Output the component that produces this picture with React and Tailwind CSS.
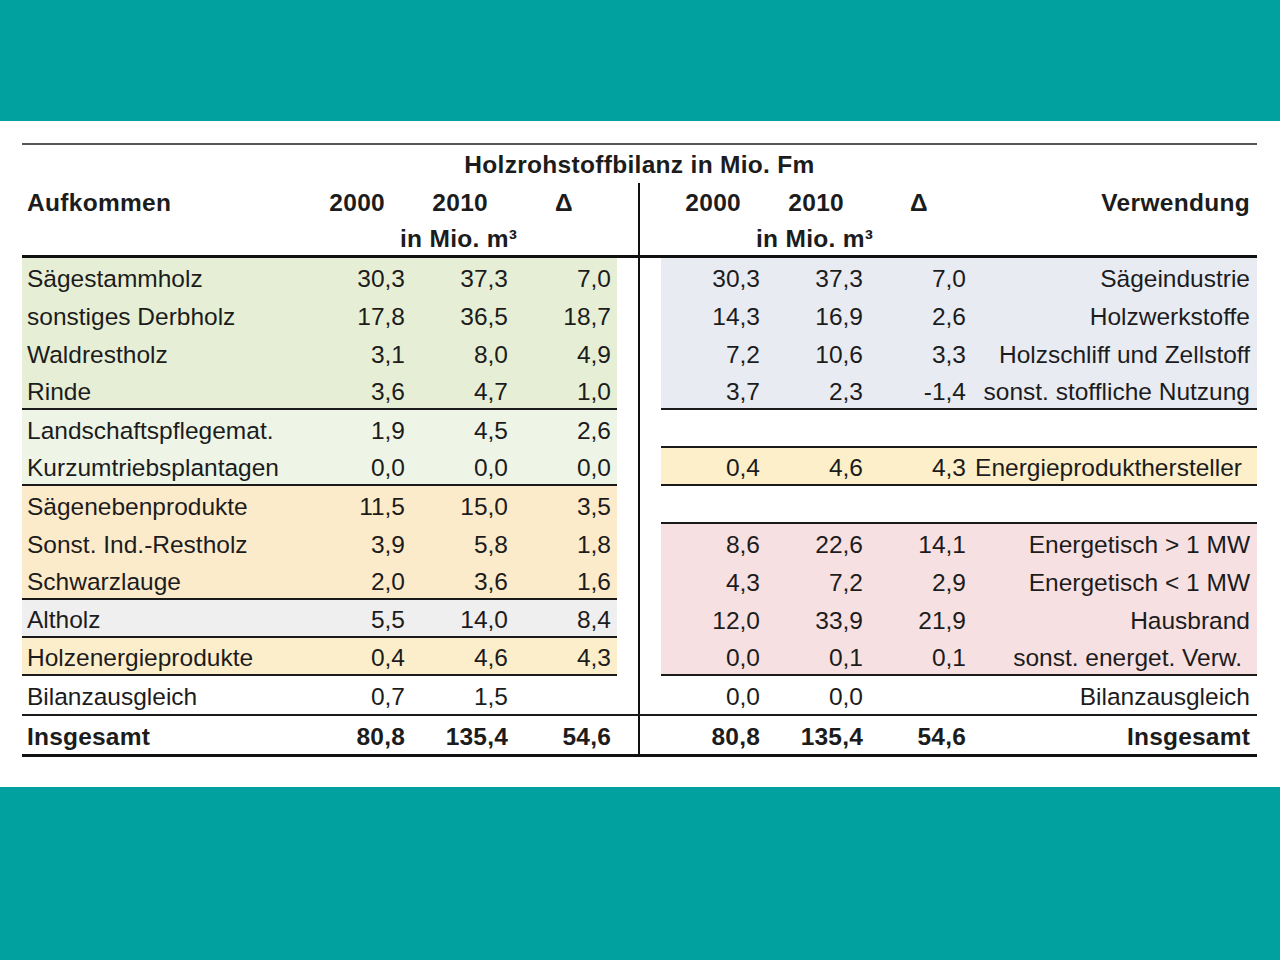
import React from "react";

const line = "border-b-2 border-[#1a1a1a]";

const links = [
  { n: "Sägestammholz", a: "30,3", b: "37,3", d: "7,0", bg: "bg-[#e6efd6]" },
  { n: "sonstiges Derbholz", a: "17,8", b: "36,5", d: "18,7", bg: "bg-[#e6efd6]" },
  { n: "Waldrestholz", a: "3,1", b: "8,0", d: "4,9", bg: "bg-[#e6efd6]" },
  { n: "Rinde", a: "3,6", b: "4,7", d: "1,0", bg: "bg-[#e6efd6]", end: true },
  { n: "Landschaftspflegemat.", a: "1,9", b: "4,5", d: "2,6", bg: "bg-[#eef5e6]" },
  { n: "Kurzumtriebsplantagen", a: "0,0", b: "0,0", d: "0,0", bg: "bg-[#eef5e6]", end: true },
  { n: "Sägenebenprodukte", a: "11,5", b: "15,0", d: "3,5", bg: "bg-[#fcebcb]" },
  { n: "Sonst. Ind.-Restholz", a: "3,9", b: "5,8", d: "1,8", bg: "bg-[#fcebcb]" },
  { n: "Schwarzlauge", a: "2,0", b: "3,6", d: "1,6", bg: "bg-[#fcebcb]", end: true },
  { n: "Altholz", a: "5,5", b: "14,0", d: "8,4", bg: "bg-[#efefef]", end: true },
  { n: "Holzenergieprodukte", a: "0,4", b: "4,6", d: "4,3", bg: "bg-[#fdeecb]", end: true },
  { n: "Bilanzausgleich", a: "0,7", b: "1,5", d: "", bg: "bg-white" },
];

const rechts = [
  { n: "Sägeindustrie", a: "30,3", b: "37,3", d: "7,0", bg: "bg-[#e9ebf3]" },
  { n: "Holzwerkstoffe", a: "14,3", b: "16,9", d: "2,6", bg: "bg-[#e9ebf3]" },
  { n: "Holzschliff und Zellstoff", a: "7,2", b: "10,6", d: "3,3", bg: "bg-[#e9ebf3]" },
  { n: "sonst. stoffliche Nutzung", a: "3,7", b: "2,3", d: "-1,4", bg: "bg-[#e9ebf3]", end: true },
  { n: "", a: "", b: "", d: "", bg: "bg-white", end: true },
  { n: "Energieprodukthersteller", a: "0,4", b: "4,6", d: "4,3", bg: "bg-[#fdefc9]", end: true, pad: true },
  { n: "", a: "", b: "", d: "", bg: "bg-white", end: true },
  { n: "Energetisch > 1 MW", a: "8,6", b: "22,6", d: "14,1", bg: "bg-[#f7e0e1]" },
  { n: "Energetisch < 1 MW", a: "4,3", b: "7,2", d: "2,9", bg: "bg-[#f7e0e1]" },
  { n: "Hausbrand", a: "12,0", b: "33,9", d: "21,9", bg: "bg-[#f7e0e1]" },
  { n: "sonst. energet. Verw.", a: "0,0", b: "0,1", d: "0,1", bg: "bg-[#f7e0e1]", end: true, pad: true },
  { n: "Bilanzausgleich", a: "0,0", b: "0,0", d: "", bg: "bg-white" },
];

function Trenner() {
  return (
    <div className="w-[44px] flex justify-center">
      <div className="w-[2px] bg-[#111]" />
    </div>
  );
}

function LinkeZeile({ z }) {
  return (
    <div
      className={`h-[38px] grid grid-cols-[323px_60px_103px_103px] pr-[6px] pt-[4px] items-center ${z.bg} ${z.end ? line : ""}`}
    >
      <span className="pl-[5px] whitespace-nowrap">{z.n}</span>
      <span className="text-right">{z.a}</span>
      <span className="text-right">{z.b}</span>
      <span className="text-right">{z.d}</span>
    </div>
  );
}

function RechteZeile({ z }) {
  return (
    <div
      className={`h-[38px] grid grid-cols-[99px_103px_103px_284px] pr-[7px] pt-[4px] items-center ${z.bg} ${z.end ? line : ""}`}
    >
      <span className="text-right">{z.a}</span>
      <span className="text-right">{z.b}</span>
      <span className="text-right">{z.d}</span>
      <span className={`text-right whitespace-nowrap ${z.pad ? "pr-[8px]" : ""}`}>{z.n}</span>
    </div>
  );
}

export default function App() {
  return (
    <div className="w-[1280px] h-[960px] flex flex-col bg-white text-[#1c1c1c] font-['Liberation_Sans',Arial,sans-serif] text-[24.5px] leading-none">
      <div className="h-[121px] bg-[#00a19f]" />

      <div className="h-[666px] pt-[22px] pl-[22px] pr-[23px]">
        {/* Titel */}
        <div className="border-t-2 border-[#555] h-[40px] pt-[3px] flex items-center justify-center font-bold tracking-[0.3px]">
          Holzrohstoffbilanz in Mio. Fm
        </div>

        {/* Kopfzeilen */}
        <div className="flex border-b-[3px] border-[#111] font-bold tracking-[0.3px]">
          <div className="w-[595px]">
            <div className="h-[39px] pt-[2px] grid grid-cols-[303px_80px_103px_103px] pr-[6px] items-center">
              <span className="pl-[5px]">Aufkommen</span>
              <span className="text-right pr-[20px]">2000</span>
              <span className="text-right pr-[20px]">2010</span>
              <span className="text-right pr-[38px]">Δ</span>
            </div>
            <div className="h-[33px] pt-[2px] flex items-center pl-[378px]">in Mio. m³</div>
          </div>
          <Trenner />
          <div className="w-[596px]">
            <div className="h-[39px] pt-[2px] grid grid-cols-[99px_103px_103px_284px] pr-[7px] items-center">
              <span className="text-right pr-[19px]">2000</span>
              <span className="text-right pr-[19px]">2010</span>
              <span className="text-right pr-[38px]">Δ</span>
              <span className="text-right">Verwendung</span>
            </div>
            <div className="h-[33px] pt-[2px] flex items-center pl-[95px]">in Mio. m³</div>
          </div>
        </div>

        {/* Daten */}
        <div className="flex border-b-2 border-[#1a1a1a]">
          <div className="w-[595px]">
            {links.map((z) => (
              <LinkeZeile key={z.n} z={z} />
            ))}
          </div>
          <Trenner />
          <div className="w-[596px]">
            {rechts.map((z, i) => (
              <RechteZeile key={i} z={z} />
            ))}
          </div>
        </div>

        {/* Summe */}
        <div className="flex border-b-[3px] border-[#111] font-bold tracking-[0.2px]">
          <div className="w-[595px]">
            <LinkeZeile z={{ n: "Insgesamt", a: "80,8", b: "135,4", d: "54,6", bg: "" }} />
          </div>
          <Trenner />
          <div className="w-[596px]">
            <RechteZeile z={{ n: "Insgesamt", a: "80,8", b: "135,4", d: "54,6", bg: "" }} />
          </div>
        </div>
      </div>

      <div className="flex-1 bg-[#00a19f]" />
    </div>
  );
}
